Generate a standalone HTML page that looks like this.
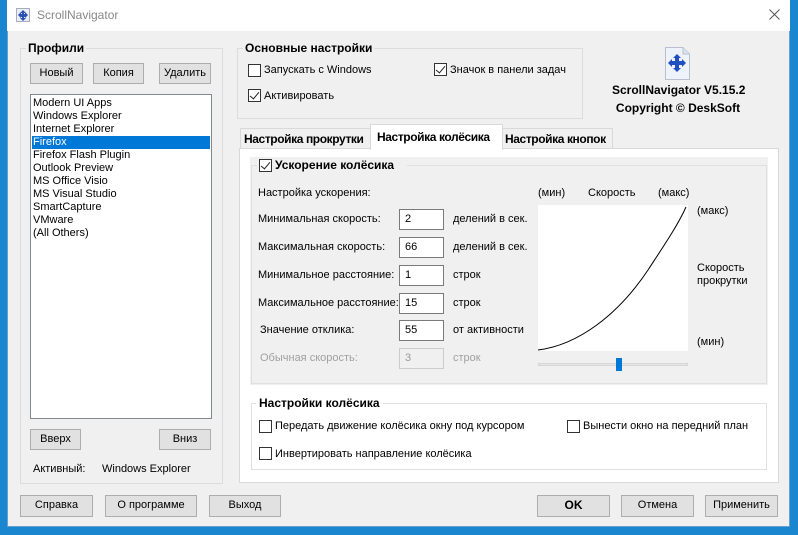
<!DOCTYPE html>
<html><head><meta charset="utf-8"><style>
*{box-sizing:border-box}
body{margin:0;width:798px;height:535px;background:#1a86d0;position:relative;overflow:hidden;font-family:"Liberation Sans",sans-serif;font-size:11px;color:#000}
.a{position:absolute;white-space:nowrap}
#win{position:absolute;left:7px;top:0;width:783px;height:527px;background:#f0f0f0;border:1px solid #6a9ed0;border-top:none}
#title{position:absolute;left:7px;top:0;width:783px;height:31px;background:#fff}
.btn{position:absolute;background:#e1e1e1;border:1px solid #adadad;text-align:center;line-height:19px;font-size:11px}
.grp{position:absolute;border:1px solid #dcdcdc}
.gt{position:absolute;background:#f0f0f0;padding:0 2px;font-weight:bold;font-size:12px}
.cb{position:absolute;width:13px;height:13px;border:1px solid #333;background:#fff}
.cb.c::after{content:"";position:absolute;left:3px;top:0px;width:4px;height:8px;border:solid #222;border-width:0 1px 1px 0;transform:rotate(40deg)}
.inp{position:absolute;width:45px;height:21px;border:1px solid #7a7a7a;background:#fff;padding-left:5px;line-height:19px}
.li{position:absolute;left:32px;height:13px;line-height:13px;width:178px;padding-left:1px}
.tab{font-weight:bold;font-size:12px;letter-spacing:-0.4px}
</style></head><body>
<div id="win"></div>
<div id="title"></div>
<svg class="a" style="left:16px;top:8px" width="14" height="14" viewBox="0 0 14 14"><rect x="0.5" y="0.5" width="13" height="13" fill="#e8eef8" stroke="#aab"/><path d="M7 2L10 5H8V6H9V9H8V10H10L7 13 4 10H6V9H5V6H6V5H4Z" fill="#2a4fb8"/><path d="M2 7L5 4V10ZM12 7L9 4V10Z" fill="#2a4fb8"/></svg>
<div class="a" style="left:37px;top:8px;font-size:12px;color:#888">ScrollNavigator</div>
<svg class="a" style="left:769px;top:9px" width="11" height="11"><path d="M0.5 0.5L10.5 10.5M10.5 0.5L0.5 10.5" stroke="#555" stroke-width="1"/></svg>

<!-- Profiles -->
<div class="grp" style="left:20px;top:48px;width:203px;height:436px"></div>
<div class="gt" style="left:26px;top:41px">Профили</div>
<div class="btn" style="left:30px;top:63px;width:53px;height:21px">Новый</div>
<div class="btn" style="left:93px;top:63px;width:51px;height:21px">Копия</div>
<div class="btn" style="left:159px;top:63px;width:52px;height:21px">Удалить</div>
<div class="a" style="left:30px;top:94px;width:182px;height:325px;background:#fff;border:1px solid #828790"></div>
<div class="li" style="top:97px">Modern UI Apps</div>
<div class="li" style="top:110px">Windows Explorer</div>
<div class="li" style="top:123px">Internet Explorer</div>
<div class="li" style="top:136px;background:#0078d7;color:#fff">Firefox</div>
<div class="li" style="top:149px">Firefox Flash Plugin</div>
<div class="li" style="top:162px">Outlook Preview</div>
<div class="li" style="top:175px">MS Office Visio</div>
<div class="li" style="top:188px">MS Visual Studio</div>
<div class="li" style="top:201px">SmartCapture</div>
<div class="li" style="top:214px">VMware</div>
<div class="li" style="top:227px">(All Others)</div>
<div class="btn" style="left:30px;top:429px;width:51px;height:21px">Вверх</div>
<div class="btn" style="left:159px;top:429px;width:52px;height:21px">Вниз</div>
<div class="a" style="left:33px;top:463px">Активный:</div>
<div class="a" style="left:102px;top:463px">Windows Explorer</div>

<!-- Main settings -->
<div class="grp" style="left:237px;top:48px;width:346px;height:71px"></div>
<div class="gt" style="left:243px;top:41px">Основные настройки</div>
<div class="cb" style="left:248px;top:64px"></div><div class="a" style="left:264px;top:64px">Запускать с Windows</div>
<div class="cb c" style="left:248px;top:89px"></div><div class="a" style="left:264px;top:90px">Активировать</div>
<div class="cb c" style="left:434px;top:63px"></div><div class="a" style="left:450px;top:64px">Значок в панели задач</div>

<svg class="a" style="left:665px;top:47px" width="25" height="33" viewBox="0 0 25 33"><path d="M0.5 0.5H18L24.5 7V32.5H0.5Z" fill="#eef2fa" stroke="#b8c0d0"/><path d="M18 0.5V7H24.5" fill="#dde3ee" stroke="#b8c0d0"/><path d="M12 7L16 11H14V14H17V12L21 16 17 20V18H14V21H16L12 25 8 21H10V18H7V20L3 16 7 12V14H10V11H8Z" fill="#1f4fc0"/></svg>
<div class="a" style="left:612px;top:83px;width:132px;text-align:center;font-weight:bold;font-size:12px">ScrollNavigator V5.15.2</div>
<div class="a" style="left:612px;top:101px;width:132px;text-align:center;font-weight:bold;font-size:12px">Copyright © DeskSoft</div>

<!-- Tabs -->
<div class="a" style="left:239px;top:148px;width:540px;height:335px;background:#fff;border:1px solid #d9d9d9"></div>
<div class="a tab" style="left:240px;top:128px;width:131px;height:21px;border:1px solid #d9d9d9;border-bottom:none;padding:3px 0 0 3px">Настройка прокрутки</div>
<div class="a tab" style="left:502px;top:128px;width:111px;height:21px;border:1px solid #d9d9d9;border-bottom:none;padding:3px 0 0 2px">Настройка кнопок</div>
<div class="a tab" style="left:370px;top:124px;width:133px;height:26px;background:#fff;border:1px solid #d9d9d9;border-bottom:none;padding:5px 0 0 6px">Настройка колёсика</div>

<!-- Acceleration group -->
<div class="a" style="left:250px;top:157px;width:518px;height:228px;background:#f0f0f0"></div>
<div class="grp" style="left:251px;top:165px;width:516px;height:219px;border-color:#e0e0e0"></div>
<div class="a" style="left:257px;top:158px;width:150px;height:15px;background:#f0f0f0"></div>
<div class="cb c" style="left:259px;top:159px"></div>
<div class="a" style="left:275px;top:158px;font-weight:bold;font-size:12px">Ускорение колёсика</div>
<div class="a" style="left:258px;top:187px">Настройка ускорения:</div>
<div class="a" style="left:258px;top:213px">Минимальная скорость:</div>
<div class="inp" style="left:399px;top:209px">2</div><div class="a" style="left:453px;top:213px">делений в сек.</div>
<div class="a" style="left:258px;top:241px">Максимальная скорость:</div>
<div class="inp" style="left:399px;top:237px">66</div><div class="a" style="left:453px;top:241px">делений в сек.</div>
<div class="a" style="left:258px;top:269px">Минимальное расстояние:</div>
<div class="inp" style="left:399px;top:265px">1</div><div class="a" style="left:453px;top:269px">строк</div>
<div class="a" style="left:258px;top:297px">Максимальное расстояние:</div>
<div class="inp" style="left:399px;top:293px">15</div><div class="a" style="left:453px;top:297px">строк</div>
<div class="a" style="left:260px;top:324px">Значение отклика:</div>
<div class="inp" style="left:399px;top:320px">55</div><div class="a" style="left:453px;top:324px">от активности</div>
<div class="a" style="left:260px;top:352px;color:#a0a0a0">Обычная скорость:</div>
<div class="inp" style="left:399px;top:348px;background:#f0f0f0;border-color:#ccc;color:#999">3</div><div class="a" style="left:453px;top:352px;color:#a0a0a0">строк</div>

<div class="a" style="left:538px;top:187px">(мин)</div>
<div class="a" style="left:588px;top:187px">Скорость</div>
<div class="a" style="left:658px;top:187px">(макс)</div>
<svg class="a" style="left:538px;top:205px" width="150" height="146"><rect width="150" height="146" fill="#fff"/><path d="M0 145C40 140 80 110 110 65C125 42 140 20 148 2" fill="none" stroke="#000" stroke-width="1"/></svg>
<div class="a" style="left:697px;top:205px">(макс)</div>
<div class="a" style="left:697px;top:262px;line-height:13px">Скорость<br>прокрутки</div>
<div class="a" style="left:697px;top:336px">(мин)</div>
<div class="a" style="left:538px;top:363px;width:150px;height:3px;background:#e7e7e7;border:1px solid #d6d6d6"></div>
<div class="a" style="left:616px;top:358px;width:6px;height:13px;background:#0078d7"></div>

<!-- Wheel settings -->
<div class="grp" style="left:251px;top:403px;width:516px;height:67px;border-color:#e0e0e0"></div>
<div class="a" style="left:256px;top:396px;padding:0 3px;background:#fff;font-weight:bold;font-size:12px">Настройки колёсика</div>
<div class="cb" style="left:259px;top:420px"></div><div class="a" style="left:275px;top:420px">Передать движение колёсика окну под курсором</div>
<div class="cb" style="left:567px;top:420px"></div><div class="a" style="left:583px;top:420px">Вынести окно на передний план</div>
<div class="cb" style="left:259px;top:447px"></div><div class="a" style="left:275px;top:448px">Инвертировать направление колёсика</div>

<!-- bottom -->
<div class="btn" style="left:20px;top:495px;width:73px;height:22px">Справка</div>
<div class="btn" style="left:105px;top:495px;width:92px;height:22px">О программе</div>
<div class="btn" style="left:209px;top:495px;width:72px;height:22px">Выход</div>
<div class="btn" style="left:537px;top:495px;width:73px;height:22px;font-weight:bold;font-size:12px">OK</div>
<div class="btn" style="left:621px;top:495px;width:73px;height:22px">Отмена</div>
<div class="btn" style="left:705px;top:495px;width:73px;height:22px">Применить</div>
</body></html>
